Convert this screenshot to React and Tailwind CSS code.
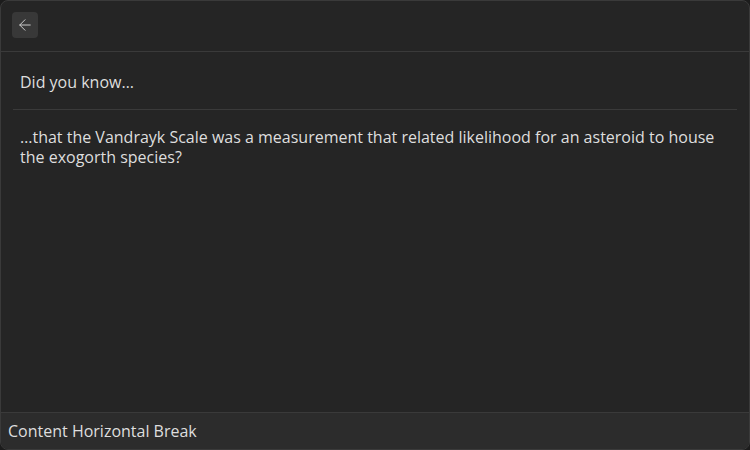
import React from 'react';
import { ArrowLeft } from 'lucide-react';

const App = () => {
    return (
        <div className="w-[750px] h-[450px] bg-[#1c1c1c]" style={{ fontFamily: '"Open Sans", "Noto Sans", sans-serif' }}>
            <div className="flex flex-col h-full rounded-lg border border-[#3a3a3a] bg-[#252525] overflow-hidden text-[#dedede]">
                <div className="h-[51px] shrink-0 border-b border-[#3a3a3a] px-[11px] pt-[11px]">
                    <button className="w-[26px] h-[26px] rounded bg-[#383838] flex items-center justify-center text-[#cfcfcf]">
                        <ArrowLeft size={18} strokeWidth={1.3} />
                    </button>
                </div>
                <div className="flex-1 px-3">
                    <div className="border-b border-[#3a3a3a] px-[7px] pt-[18px] pb-[15px] text-base leading-6">
                        Did you know…
                    </div>
                    <p className="px-[7px] pt-[17px] text-base leading-5">
                        …that the Vandrayk Scale was a measurement that related likelihood for an asteroid to house the exogorth species?
                    </p>
                </div>
                <div className="h-[37px] shrink-0 border-t border-[#3a3a3a] bg-[#2c2c2c] px-[7px] flex items-center text-base">
                    Content Horizontal Break
                </div>
            </div>
        </div>
    );
};

export default App;
